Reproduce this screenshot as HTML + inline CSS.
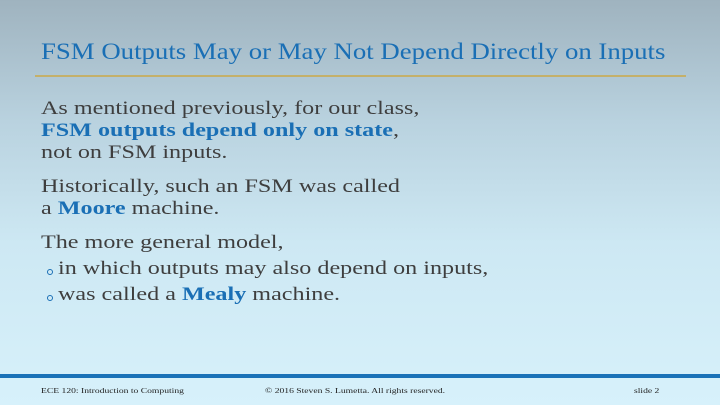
<!DOCTYPE html>
<html><head><style>
body{margin:0;width:720px;height:405px;overflow:hidden;position:relative;font-family:"Liberation Serif",serif;
background:linear-gradient(#9fb3bf 0%,#b9d2df 30%,#cde8f3 60%,#d7f1fb 100%);}
.t{position:absolute;left:41px;top:39px;font-size:23px;color:#1a6fb5;transform:scaleX(1.165);transform-origin:left;white-space:nowrap}
.gl{position:absolute;left:35px;top:75px;width:651px;height:2px;background:#c4b06a}
.b{position:absolute;left:41px;font-size:19px;color:#3e3e3e;white-space:nowrap;transform:scaleX(1.27);transform-origin:left}
.b b{color:#1a6fb5}
.u{position:absolute;left:47px;width:4px;height:4px;border:1px solid #1a6fb5;border-radius:50%}
.bar{position:absolute;left:0;top:374px;width:720px;height:4px;background:#1a72b8}
.f{position:absolute;top:386px;font-size:7.5px;color:#222;transform:scaleX(1.28);transform-origin:left;white-space:nowrap}
</style></head><body>
<div class="t">FSM Outputs May or May Not Depend Directly on Inputs</div>
<div class="gl"></div>
<div class="b" style="top:98px">As mentioned previously, for our class,</div>
<div class="b" style="top:120px"><b>FSM outputs depend only on state</b>,</div>
<div class="b" style="top:142px">not on FSM inputs.</div>
<div class="b" style="top:176px">Historically, such an FSM was called</div>
<div class="b" style="top:198px">a <b>Moore</b> machine.</div>
<div class="b" style="top:232px">The more general model,</div>
<div class="u" style="top:269px"></div>
<div class="b" style="top:258px;left:58px">in which outputs may also depend on inputs,</div>
<div class="u" style="top:295px"></div>
<div class="b" style="top:284px;left:58px">was called a <b>Mealy</b> machine.</div>
<div class="bar"></div>
<div class="f" style="left:41px">ECE 120: Introduction to Computing</div>
<div class="f" style="left:265px">© 2016 Steven S. Lumetta.  All rights reserved.</div>
<div class="f" style="left:634px">slide 2</div>
</body></html>
